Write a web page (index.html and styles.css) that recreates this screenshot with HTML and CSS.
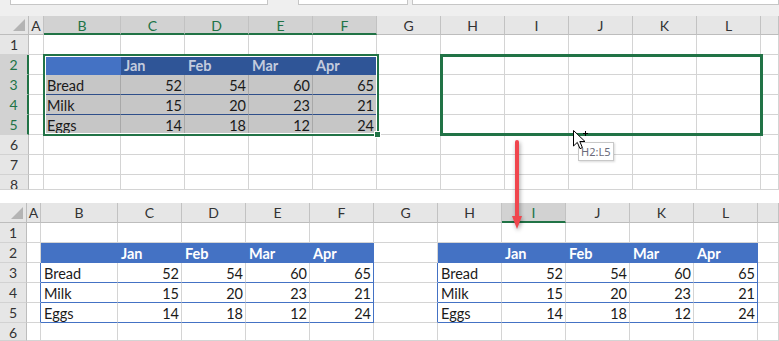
FILE: index.html
```html
<!DOCTYPE html>
<html lang="en">

<head>
    <meta charset="UTF-8">
    <meta name="viewport" content="width=device-width, initial-scale=1.0">
    <title>Move Table Range</title>
    <link rel="stylesheet" href="styles.css">
</head>

<body>
    <div class="page">
        <div class="ribbon">
            <div class="box box-name"></div>
            <div class="box box-mid"></div>
            <div class="box box-formula"></div>
        </div>

        <div class="sheet sheet-top" id="sheet-top"></div>
        <div class="sheet sheet-bottom" id="sheet-bottom"></div>

        <div class="sel-box"></div>
        <div class="fill-handle"></div>
        <div class="drag-box"></div>

        <svg class="arrow" width="20" height="96" viewBox="0 0 20 96">
            <line x1="9" y1="4" x2="9" y2="80" stroke="#f0464e" stroke-width="4" stroke-linecap="round" />
            <polygon points="4,78 14,78 9,91" fill="#f0464e" />
        </svg>

        <div class="tip">H2:L5</div>

        <svg class="cursor" width="20" height="22" viewBox="0 0 20 22">
            <path d="M1.5 1.5 V17 L5.3 13.4 L8 19.6 L10.4 18.6 L7.8 12.5 H13 Z" fill="#fff" stroke="#000" stroke-width="1" />
            <path d="M13.5 2 V7 M11 4.5 H16" stroke="#000" stroke-width="1" />
        </svg>
    </div>

    <script>
        const letters = ["", "A", "B", "C", "D", "E", "F", "G", "H", "I", "J", "K", "L", ""];

        const table = [
            ["", "Jan", "Feb", "Mar", "Apr"],
            ["Bread", 52, 54, 60, 65],
            ["Milk", 15, 20, 23, 21],
            ["Eggs", 14, 18, 12, 24]
        ];

        const makeCell = (className, text) => {
            const cell = document.createElement("div");
            cell.className = className;
            if (text !== undefined) cell.innerText = text;
            return cell;
        };

        // find which table (if any) sits under a cell
        const tableCell = (tables, row, col) => {
            for (const t of tables) {
                const tr = row - t.row;
                const tc = col - t.col;
                if (tr >= 0 && tr < 4 && tc >= 0 && tc < 5) {
                    let cls = tr === 0 ? "c th" : "c td";
                    if (tr > 0 && tc > 0) cls += " num";
                    if (tc === 4) cls += " last";
                    if (t.dim && !(tr === 0 && tc === 0)) cls += " dim";
                    return makeCell(cls, table[tr][tc]);
                }
                if (tr > 0 && tr < 4 && tc === -1 && !t.dim) {
                    return makeCell("c edge");
                }
            }
            return makeCell("c");
        };

        const buildSheet = (sheet, rowCount, tables, selCols, selRows) => {
            letters.forEach((letter, i) => {
                if (i === 0) {
                    const corner = makeCell("c corner");
                    corner.appendChild(makeCell("tri"));
                    sheet.appendChild(corner);
                    return;
                }
                const cls = selCols.includes(i) ? "c hd sel" : "c hd";
                sheet.appendChild(makeCell(cls, letter));
            });

            for (let r = 1; r <= rowCount; r++) {
                const cls = selRows.includes(r) ? "c rn sel" : "c rn";
                sheet.appendChild(makeCell(cls, r));
                for (let i = 1; i < letters.length; i++) {
                    sheet.appendChild(tableCell(tables, r, i));
                }
            }
        };

        buildSheet(document.querySelector("#sheet-top"), 8,
            [{ row: 2, col: 2, dim: true }], [2, 3, 4, 5, 6], [2, 3, 4, 5]);

        buildSheet(document.querySelector("#sheet-bottom"), 6,
            [{ row: 2, col: 2 }, { row: 2, col: 8 }], [9], []);
    </script>
</body>

</html>
```

FILE: styles.css
```css
* {
    margin: 0px;
    padding: 0px;
    box-sizing: border-box;
}

body {
    background-color: #ffffff;
    font-family: "Lato", "Liberation Sans", sans-serif;
}

.page {
    position: relative;
    width: 779px;
    height: 341px;
    overflow: hidden;
}

/* strip left over from the formula bar */
.ribbon {
    display: flex;
    height: 16px;
    padding-left: 10px;
    background-color: #efefef;
}

.box {
    height: 5px;
    background-color: #ffffff;
    border: 1px solid #c6c6c6;
    border-top: none;
}

.box-name {
    width: 258px;
}

.box-mid {
    width: 110px;
    margin-left: 30px;
}

.box-formula {
    flex: 1;
    margin-left: 4px;
}

.sheet {
    display: grid;
    overflow: hidden;
    font-size: 14.5px;
    color: #1a1a1a;
}

.sheet-top {
    grid-template-columns: 29px 15px 77px repeat(10, 64px) 1fr;
    grid-template-rows: 19px repeat(7, 20px) 15px;
    height: 174px;
}

.sheet-bottom {
    grid-template-columns: 27px 14px 77px repeat(10, 64px) 1fr;
    grid-template-rows: repeat(6, 20px) 18px;
    height: 138px;
    margin-top: 13px;
}

.c {
    border-right: 1px solid #d4d4d4;
    border-bottom: 1px solid #d4d4d4;
    padding: 2px 2px 0px 3px;
    line-height: 17px;
    white-space: nowrap;
    overflow: hidden;
}

.corner {
    display: flex;
    justify-content: flex-end;
    align-items: flex-end;
    padding: 0px 3px 3px 0px;
    background-color: #e6e6e6;
    border-right-color: #bdbdbd;
    border-bottom-color: #bdbdbd;
}

.tri {
    width: 12px;
    height: 12px;
    background-color: #b4b4b4;
    clip-path: polygon(100% 0, 100% 100%, 0 100%);
}

.hd {
    padding: 0px;
    text-align: center;
    line-height: 19px;
    font-size: 14px;
    color: #333333;
    background-color: #e6e6e6;
    border-right-color: #c2c2c2;
    border-bottom-color: #bdbdbd;
}

.rn {
    padding: 1px 0px 0px 0px;
    text-align: center;
    line-height: 18px;
    font-size: 14px;
    color: #333333;
    background-color: #e6e6e6;
    border-right-color: #bdbdbd;
    border-bottom-color: #d2d2d2;
}

.hd.sel {
    background-color: #d2d2d2;
    border-bottom: 2px solid #217346;
    color: #217346;
}

.rn.sel {
    background-color: #d2d2d2;
    border-right: 2px solid #217346;
    color: #217346;
}

.th {
    background-color: #4472c4;
    border-color: #4472c4;
    color: #ffffff;
    font-weight: bold;
}

.td {
    border-bottom-color: #4472c4;
}

.last,
.edge {
    border-right-color: #4472c4;
}

.num {
    text-align: right;
}

.th.dim {
    background-color: #2f5597;
    border-color: #2f5597;
    color: #c3cbdd;
}

.td.dim {
    background-color: #c6c6c6;
    border-right-color: #a8a8a8;
    border-bottom-color: #2f4f8a;
}

/* overlays */
.sel-box {
    position: absolute;
    left: 43px;
    top: 54px;
    width: 336px;
    height: 82px;
    border: 2px solid #217346;
    box-shadow: inset 0 0 0 1px #ffffff;
}

.fill-handle {
    position: absolute;
    left: 374px;
    top: 131px;
    width: 7px;
    height: 7px;
    background-color: #217346;
    border: 1px solid #ffffff;
}

.drag-box {
    position: absolute;
    left: 440px;
    top: 54px;
    width: 323px;
    height: 82px;
    border: 3px solid #217346;
}

.arrow {
    position: absolute;
    left: 508px;
    top: 138px;
    filter: drop-shadow(1px 2px 2px rgba(0, 0, 0, 0.35));
}

.tip {
    position: absolute;
    left: 578px;
    top: 142px;
    width: 36px;
    height: 19px;
    padding-left: 2px;
    background-color: #ffffff;
    border: 1px solid #c8c8c8;
    box-shadow: 1px 1px 2px rgba(0, 0, 0, 0.15);
    font-family: "Noto Sans", sans-serif;
    font-size: 11px;
    line-height: 17px;
    color: #6a6a7a;
}

.cursor {
    position: absolute;
    left: 572px;
    top: 129px;
}
```
